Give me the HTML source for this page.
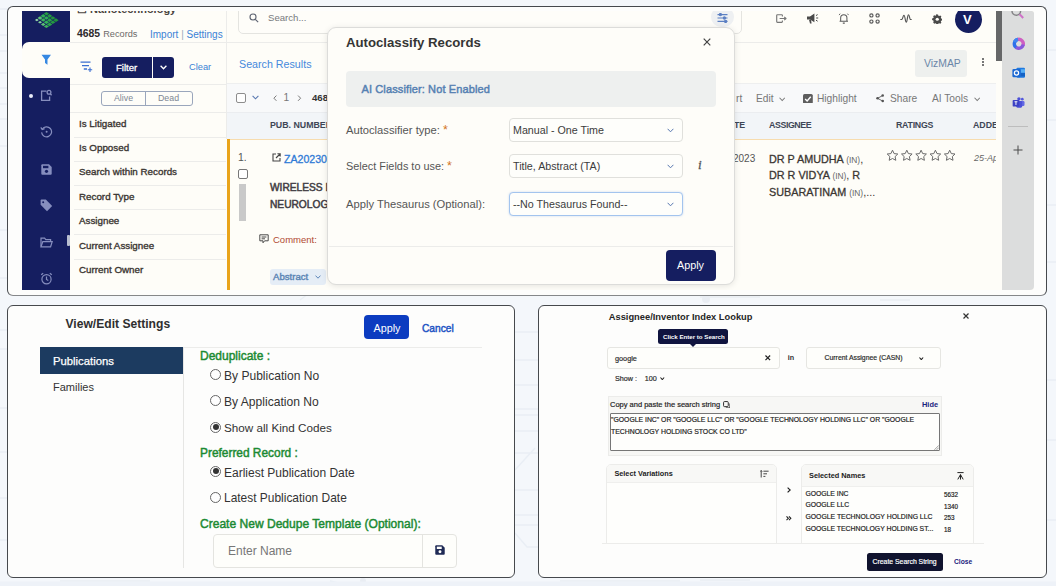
<!DOCTYPE html>
<html>
<head>
<meta charset="utf-8">
<title>UI</title>
<style>
*{box-sizing:border-box;margin:0;padding:0}
html,body{width:1056px;height:586px;overflow:hidden}
body{background:#f4f7fb;font-family:"Liberation Sans",sans-serif;position:relative;color:#333}
.a{position:absolute}
.t{position:absolute;white-space:nowrap;line-height:1}
.b{font-weight:bold}
.frame{position:absolute;border:1px solid #46494d;border-radius:6px;background:#fdfdfc;overflow:hidden}
#ftop{border-bottom-color:#85878a}
/* ---------- top app ---------- */
#app{position:absolute;left:14px;top:4px;width:1012px;height:279px;background:#fefdf8;overflow:hidden}
.nav{position:absolute;left:0;top:0;width:48px;height:279px;background:#151e60}
.hl{position:absolute;height:1px;background:#ececea}
.li{position:absolute;left:57px;font-size:9.8px;color:#3b3632;white-space:nowrap;line-height:1;-webkit-text-stroke:0.35px #3b3632}
.sb{-webkit-text-stroke:0.3px currentColor}
.s2{-webkit-text-stroke:0.18px currentColor}
</style>
</head>
<body>
<!-- background faint lines -->
<svg class="a" style="left:0;top:0" width="1056" height="586" viewBox="0 0 1056 586" fill="none" stroke="#e9eef5" stroke-width="1.3">
  <path d="M0 9H8M0 35H8M0 51H8M0 73H8M0 88H8M0 104H8M0 119H8M0 146H8M0 230H8M0 278H8M0 330H8M0 349H8M0 408H8M0 452H8M0 498H8M0 540H8"/>
  <path d="M1047 50H1056M1047 120H1056M1047 205H1056M1047 262H1056M1047 380H1056M1047 440H1056M1047 520H1056"/>
  <path d="M515 332H539M515 360H539M515 385H539M515 409H539M515 415H539M515 431H539M515 453H539M515 490H539M515 515H539M515 525H539M515 470l20-22M515 533l12 14h12"/>
  <path d="M300 300l8-6M700 297h60M880 300h30M60 581h90M560 581h120M330 581l20 5M700 580h50" stroke="#e9eef4"/>
  <circle cx="706" cy="299" r="4" fill="#e9edf3" stroke="none"/><circle cx="1040" cy="209" r="4" fill="#e9edf3" stroke="none"/><circle cx="363" cy="581" r="3" fill="#e9edf3" stroke="none"/>
  <path d="M0 584H1056" stroke="#eef2f8" stroke-width="5"/>
</svg>

<!-- ================= TOP FRAME ================= -->
<div class="frame" id="ftop" style="left:7px;top:6px;width:1040px;height:290px">
 <div id="app">
  <div class="a" style="left:-2px;top:0;width:2px;height:279px;background:#e2e2e2"></div>
  <div class="nav">
   <!-- logo -->
   <svg class="a" style="left:11px;top:0px" width="26" height="20" viewBox="0 0 26 20">
    <g transform="translate(13.4,1.0) scale(0.9,0.6) rotate(45)">
     <rect x="0" y="0" width="4.2" height="4.2" fill="#259a42"/><rect x="5" y="0" width="4.2" height="4.2" fill="#259a42"/><rect x="10" y="0" width="4.2" height="4.2" fill="#21903c"/><rect x="15" y="0" width="4.2" height="4.2" fill="#21903c"/>
     <rect x="0" y="5" width="4.2" height="4.2" fill="#2fb154"/><rect x="5" y="5" width="4.2" height="4.2" fill="#2fb154"/><rect x="10" y="5" width="4.2" height="4.2" fill="#29a449"/><rect x="15" y="5" width="4.2" height="4.2" fill="#259a42"/>
     <rect x="0" y="10" width="4" height="4" fill="#5cc274"/><rect x="5" y="10" width="4" height="4" fill="#3db35a"/><rect x="10" y="10" width="4.2" height="4.2" fill="#33b558"/><rect x="15" y="10" width="4.2" height="4.2" fill="#29a449"/>
     <rect x="0.5" y="15.5" width="3" height="3" fill="#9bdcab"/><rect x="5.5" y="15.5" width="3.2" height="3.2" fill="#7fd093"/><rect x="10.3" y="15.3" width="3.6" height="3.6" fill="#5cc274"/><rect x="15" y="15" width="4" height="4" fill="#3db35a"/>
    </g>
   </svg>
   <!-- active tab -->
   <div class="a" style="left:0;top:30.5px;width:48px;height:36px;background:#fefdf8;border-radius:7px 0 0 7px"></div>
   <svg class="a" style="left:19px;top:42.5px" width="10.5" height="11.5" viewBox="0 0 12 12" preserveAspectRatio="none"><path d="M0.6 0.8H11.4L7.4 5.8V11.2L4.6 9.4V5.8Z" fill="#3688e2"/></svg>
   <!-- doc icon -->
   <div class="a" style="left:7px;top:83px;width:4px;height:4px;border-radius:2px;background:#e8ebf7"></div>
   <svg class="a" style="left:18px;top:78px" width="13" height="13" viewBox="0 0 13 13" fill="none" stroke="#868ebe" stroke-width="1.3"><path d="M6.5 2.2H1.6V11.4H9.6V7.6"/><circle cx="9" cy="3.3" r="1.9"/><path d="M10.3 4.8L11.6 6.2"/></svg>
   <!-- history -->
   <svg class="a" style="left:18px;top:114px" width="13" height="13" viewBox="0 0 13 13" fill="none" stroke="#868ebe" stroke-width="1.2"><path d="M2.3 4.2A5 5 0 1 1 1.6 7.4"/><path d="M0.8 2.4L2.2 4.6L4.6 3.6"/><circle cx="6.6" cy="6.8" r="1" fill="#868ebe" stroke="none"/></svg>
   <!-- save -->
   <svg class="a" style="left:19px;top:153px" width="11" height="11" viewBox="0 0 11 11"><path d="M1.3 0.3H8L10.7 3V9.7Q10.7 10.7 9.7 10.7H1.3Q0.3 10.7 0.3 9.7V1.3Q0.3 0.3 1.3 0.3Z" fill="#868ebe"/><rect x="2" y="1.8" width="5.4" height="2.4" fill="#151e60"/><circle cx="5.5" cy="7.3" r="1.6" fill="#151e60"/></svg>
   <!-- tag -->
   <svg class="a" style="left:18px;top:188px" width="13" height="13" viewBox="0 0 13 13"><path d="M0.6 1.4Q0.6 0.6 1.4 0.6H5.8L12.2 7L7 12.2L0.6 5.8Z" fill="#868ebe"/><circle cx="3.2" cy="3.2" r="1" fill="#151e60"/></svg>
   <!-- folder -->
   <svg class="a" style="left:18px;top:226px" width="13" height="11" viewBox="0 0 13 11" fill="none" stroke="#868ebe" stroke-width="1.2"><path d="M1 9.6V1.2H4.6L5.8 2.6H10.6V4.4"/><path d="M1 9.8L2.8 4.6H12.2L10.6 9.8Z"/></svg>
   <div class="a" style="left:45px;top:224px;width:3px;height:11px;background:#b9bfd0;border-radius:1px"></div>
   <!-- alarm -->
   <svg class="a" style="left:18px;top:261px" width="13" height="13" viewBox="0 0 13 13" fill="none" stroke="#868ebe" stroke-width="1.2"><circle cx="6.5" cy="7.2" r="4.6"/><path d="M6.5 4.6V7.4L8.3 8.4M1.2 2.8L3.2 1.2M11.8 2.8L9.8 1.2"/></svg>
  </div>

  <!-- ===== filter panel ===== -->
  <div class="t b" style="left:55px;top:-7.2px;font-size:11px;color:#4a4440">&#9744; Nanotechnology</div>
  <div class="t" style="left:55px;top:17px;font-size:11px;color:#6d6a68"><span class="b" style="color:#2e2a2c;font-size:10.4px">4685</span> <span style="font-size:9.2px">Records</span></div>
  <div class="t" style="left:128px;top:19px;font-size:10px;color:#3b82d6">Import <span style="color:#9ab">|</span> Settings</div>
  <div class="hl" style="left:48px;top:30.5px;width:156px"></div>
  <!-- filter row -->
  <svg class="a" style="left:58px;top:50px" width="13" height="12" viewBox="0 0 13 12" fill="none" stroke="#3b6fd0" stroke-width="1.3"><path d="M0.5 1.2H10.5M2 4.6H9M3.8 8H7"/><path d="M10 6.6V11M7.8 8.8H12.2" stroke-width="1.1"/></svg>
  <div class="a" style="left:80px;top:46px;width:50px;height:21px;background:#151e60;border-radius:3px 0 0 3px"></div>
  <div class="a" style="left:131px;top:46px;width:21px;height:21px;background:#151e60;border-radius:0 3px 3px 0"></div>
  <div class="t sb" style="left:94px;top:52px;font-size:9.6px;color:#fff">Filter</div>
  <svg class="a" style="left:138px;top:54px" width="7" height="5" viewBox="0 0 7 5" fill="none" stroke="#fff" stroke-width="1.3"><path d="M0.6 0.8L3.5 3.8L6.4 0.8"/></svg>
  <div class="t" style="left:167px;top:52px;font-size:9.3px;color:#3b82d6">Clear</div>
  <div class="hl" style="left:48px;top:73px;width:156px"></div>
  <!-- alive dead -->
  <div class="a" style="left:79px;top:80px;width:92px;height:15px;border:1px solid #9aa6bc;border-radius:3px;background:#fefdf8"></div>
  <div class="a" style="left:123px;top:80px;width:1px;height:15px;background:#9aa6bc"></div>
  <div class="t" style="left:92px;top:83px;font-size:8.8px;color:#7d8794">Alive</div>
  <div class="t" style="left:136px;top:83px;font-size:8.8px;color:#7d8794">Dead</div>
  <div class="hl" style="left:48px;top:101px;width:156px"></div>
  <div class="li" style="top:107.6px">Is Litigated</div>
  <div class="hl" style="left:52px;top:125.5px;width:152px"></div>
  <div class="li" style="top:132px">Is Opposed</div>
  <div class="hl" style="left:52px;top:150px;width:152px"></div>
  <div class="li" style="top:156.4px">Search within Records</div>
  <div class="hl" style="left:52px;top:174px;width:152px"></div>
  <div class="li" style="top:180.8px">Record Type</div>
  <div class="hl" style="left:52px;top:198px;width:152px"></div>
  <div class="li" style="top:205.2px">Assignee</div>
  <div class="hl" style="left:52px;top:223px;width:152px"></div>
  <div class="li" style="top:229.6px">Current Assignee</div>
  <div class="hl" style="left:52px;top:248px;width:152px"></div>
  <div class="li" style="top:254px">Current Owner</div>
  <!-- divider -->
  <div class="a" style="left:204px;top:0;width:1px;height:128px;background:#ececea"></div>
<!-- ===== main area ===== -->
  <!-- search box -->
  <div class="a" style="left:216px;top:-10px;width:504px;height:32.5px;border:1px solid #e4e4e0;border-radius:5px;background:#fefdf9"></div>
  <svg class="a" style="left:227.3px;top:2.4px" width="10" height="10" viewBox="0 0 10 10" fill="none" stroke="#5e6472" stroke-width="1.15"><circle cx="4" cy="4" r="3"/><path d="M6.3 6.3L9.2 9.2"/></svg>
  <div class="t" style="left:246px;top:2.3px;font-size:9.6px;color:#77797c">Search...</div>
  <div class="a" style="left:689px;top:-4px;width:23px;height:20px;border-radius:10px;background:#eef0f2"></div>
  <svg class="a" style="left:695px;top:2px" width="11" height="10" viewBox="0 0 11 10" fill="none" stroke="#5b7fc2" stroke-width="1.1"><path d="M0.5 1.6H10.5M0.5 5H10.5M0.5 8.4H10.5"/><circle cx="3.4" cy="1.6" r="1.1" fill="#5b7fc2"/><circle cx="7.4" cy="5" r="1.1" fill="#5b7fc2"/><circle cx="8.6" cy="8.4" r="1.1" fill="#5b7fc2"/></svg>
  <!-- header icons -->
  <svg class="a" style="left:754px;top:3.2px" width="11" height="9" viewBox="0 0 11 9" fill="none" stroke="#777" stroke-width="1.15" stroke-linejoin="round"><path d="M6.4 2.4V1.4Q6.4 0.7 5.7 0.7H1.4Q0.7 0.7 0.7 1.4V7.6Q0.7 8.3 1.4 8.3H5.7Q6.4 8.3 6.4 7.6V6.6"/><path d="M3.6 4.5H9.8M8.2 2.8L10 4.5L8.2 6.2"/></svg>
  <svg class="a" style="left:784px;top:1px" width="13" height="13" viewBox="0 0 13 13"><path d="M1 4.4H4L8.4 1.6V10.2L4 7.6H1Z" fill="#4a4a4a"/><path d="M3 7.8L4 11.4H5.6L5 7.8" fill="#4a4a4a"/><path d="M10 3.6L11.6 2.6M10.2 6H12.2M10 8.2L11.6 9.2" stroke="#4a4a4a" stroke-width="1" fill="none"/></svg>
  <svg class="a" style="left:815.8px;top:1px" width="11.6" height="12.6" viewBox="0 0 13 14" fill="none" stroke="#5a5a5a" stroke-width="1.15"><path d="M3 10.2V6.4A3.5 3.5 0 0 1 10 6.4V10.2M1.8 10.4H11.2M5.4 12.4H7.6"/><path d="M1.2 3.4L2.4 1.8M11.8 3.4L10.6 1.8" stroke-width="1"/></svg>
  <svg class="a" style="left:847px;top:2px" width="11" height="11" viewBox="0 0 11 11" fill="none" stroke="#5a5a5a" stroke-width="1.2"><circle cx="2.4" cy="2.4" r="1.6"/><circle cx="8.6" cy="2.4" r="1.6"/><circle cx="2.4" cy="8.6" r="1.6"/><circle cx="8.6" cy="8.6" r="1.6"/></svg>
  <svg class="a" style="left:877.5px;top:2px" width="12" height="11" viewBox="0 0 13 11" fill="none" stroke="#555" stroke-width="1.25" stroke-linecap="round"><path d="M0.8 6.6H1.8C3 6.6 3.2 2 4.3 2C5.5 2 5.6 9.4 6.8 9.4C8 9.4 8 1.4 9.2 1.4C10.3 1.4 10.3 6 11.2 6.600000000000000H12.2"/></svg>
  <svg class="a" style="left:909.5px;top:2.5px" width="10.5" height="10.5" viewBox="0 0 13 13"><path d="M6.5 0.8l1 .1.4 1.5 1 .5 1.4-.7 1.3 1.3-.7 1.4.5 1 1.5.4v2l-1.5.4-.5 1 .7 1.4-1.3 1.3-1.4-.7-1 .5-.4 1.5h-2l-.4-1.5-1-.5-1.4.7L1.4 10.600000000000001l.7-1.4-.5-1L.1 7.8v-2l1.500000000000000-.4.5-1-.7-1.4L2.700000000000000 1.7000000000000002l1.4.7 1-.5.4-1.5z" fill="#4a4a4a" transform="translate(0,-0.3)"/><circle cx="6.5" cy="6.5" r="2" fill="#fefdf8"/></svg>
  <div class="a" style="left:933px;top:-5px;width:27px;height:27px;border-radius:14px;background:#151e60"></div>
  <div class="t b" style="left:941px;top:2px;font-size:13px;color:#fff">V</div>
  <div class="hl" style="left:205px;top:31px;width:769px"></div>
  <!-- search results row -->
  <div class="t" style="left:217px;top:47.8px;font-size:10.7px;color:#4589dc">Search Results</div>
  <div class="a" style="left:893px;top:39px;width:52px;height:27px;border-radius:3px;background:#eef0ee"></div>
  <div class="t" style="left:902px;top:47.6px;font-size:10.4px;color:#6a86a8">VizMAP</div>
  <div class="a" style="left:960px;top:47px;width:1.8px;height:1.8px;background:#777;box-shadow:0 3px 0 #777,0 6px 0 #777"></div>
  <!-- toolbar row -->
  <div class="a" style="left:205px;top:72px;width:769px;height:29px;background:#f8f9fa;border-top:1px solid #eeefef"></div>
  <div class="a" style="left:205px;top:101px;width:769px;height:27px;background:#f2f5f8;border-top:1px solid #ebedf0"></div>
  <div class="a" style="left:214px;top:82px;width:10px;height:10px;border:1.2px solid #8d8d8d;border-radius:2px;background:#fefefe"></div>
  <svg class="a" style="left:230px;top:84px" width="7" height="5" viewBox="0 0 7 5" fill="none" stroke="#5878b0" stroke-width="1.1"><path d="M0.6 0.8L3.5 3.8L6.4 0.8"/></svg>
  <svg class="a" style="left:251px;top:84px" width="4.5" height="6.4" viewBox="0 0 5 7" fill="none" stroke="#777" stroke-width="1.1"><path d="M3.8 0.6L1 3.5L3.8 6.4"/></svg>
  <div class="t" style="left:261.5px;top:82px;font-size:10.2px;color:#777">1</div>
  <svg class="a" style="left:275px;top:84px" width="4.5" height="6.4" viewBox="0 0 5 7" fill="none" stroke="#777" stroke-width="1.1"><path d="M1.2 0.6L4 3.5L1.2 6.4"/></svg>
  <div class="t b" style="left:290px;top:82px;font-size:9.6px;color:#333">4685</div>
  <!-- toolbar right -->
  <div class="t" style="left:714px;top:83px;font-size:10.2px;color:#777">rt</div>
  <div class="t" style="left:734px;top:83px;font-size:10.2px;color:#777">Edit</div>
  <svg class="a" style="left:756.5px;top:86px" width="6.4" height="4.6" viewBox="0 0 7 5" fill="none" stroke="#777" stroke-width="1.1"><path d="M0.6 0.8L3.5 3.8L6.4 0.8"/></svg>
  <svg class="a" style="left:781px;top:82.6px" width="9.8" height="9.8" viewBox="0 0 10 10"><rect x="0" y="0" width="10" height="10" rx="1.6" fill="#5e5e5e"/><path d="M2.2 5.2L4.2 7.2L7.9 2.8" fill="none" stroke="#fff" stroke-width="1.4"/></svg>
  <div class="t" style="left:795px;top:83px;font-size:10.2px;color:#777">Highlight</div>
  <svg class="a" style="left:853.5px;top:83.4px" width="8.6" height="8.6" viewBox="0 0 10 10" fill="#555"><circle cx="7.8" cy="1.8" r="1.5"/><circle cx="1.8" cy="5" r="1.5"/><circle cx="7.8" cy="8.2" r="1.5"/><path d="M7.8 1.8L1.8 5L7.800000000000001 8.2" fill="none" stroke="#555" stroke-width="1"/></svg>
  <div class="t" style="left:868px;top:83px;font-size:10.2px;color:#777">Share</div>
  <div class="t" style="left:910px;top:83px;font-size:10.2px;color:#777">AI Tools</div>
  <svg class="a" style="left:951.5px;top:86px" width="6.4" height="4.6" viewBox="0 0 7 5" fill="none" stroke="#777" stroke-width="1.1"><path d="M0.6 0.8L3.5 3.8L6.4 0.8"/></svg>
  <!-- table header -->
  <div class="t b" style="left:248px;top:110px;font-size:8.8px;color:#3e4656">PUB. NUMBER</div>
  <div class="t b" style="left:712px;top:110px;font-size:8.8px;color:#3e4656">TE</div>
  <div class="t b" style="left:747px;top:110px;font-size:8.8px;color:#3e4656;letter-spacing:-0.4px">ASSIGNEE</div>
  <div class="t b" style="left:874px;top:110px;font-size:8.8px;color:#3e4656;letter-spacing:-0.25px">RATINGS</div>
  <div class="t b" style="left:951px;top:110px;font-size:8.8px;color:#3e4656">ADDED</div>
  <div class="a" style="left:205px;top:127.7px;width:769px;height:1.5px;background:#f7dcae"></div>
  <div class="a" style="left:204.5px;top:127.7px;width:3px;height:152px;background:#e9a41a"></div>
  <!-- row -->
  <div class="t" style="left:216px;top:142px;font-size:10.4px;color:#555">1.</div>
  <div class="a" style="left:216px;top:158px;width:10px;height:10px;border:1.2px solid #777;border-radius:2px;background:#fefefe"></div>
  <div class="a" style="left:217px;top:173px;width:7px;height:37px;background:#c9c9c9"></div>
  <svg class="a" style="left:250px;top:142px" width="9" height="9" viewBox="0 0 9 9" fill="none" stroke="#444" stroke-width="1.1"><path d="M4 1H1V8H8V5"/><path d="M5.4 0.8H8.2V3.600000000000000M8 1L4 5"/></svg>
  <div class="t sb" style="left:262px;top:142.5px;font-size:10.6px;color:#2f7ad6">ZA2023000</div>
  <div class="t" style="left:248px;top:171.5px;font-size:10.2px;color:#433e44;-webkit-text-stroke:0.5px #433e44">WIRELESS NE</div>
  <div class="t" style="left:248px;top:188.5px;font-size:10.2px;color:#433e44;-webkit-text-stroke:0.5px #433e44">NEUROLOGI</div>
  <svg class="a" style="left:237px;top:223px" width="10" height="10" viewBox="0 0 10 10" fill="none" stroke="#4a4a4a" stroke-width="1"><path d="M0.8 0.8H9.2V6.8H5.6L4 8.8V6.8H0.8Z"/><path d="M2.6 3H7.4M2.6 4.800000000000001H6"/></svg>
  <div class="t" style="left:251px;top:224px;font-size:9.5px;color:#b14a32">Comment:</div>
  <div class="a" style="left:248px;top:258px;width:55.5px;height:15.5px;border-radius:3px;background:#e5edf6"></div>
  <div class="t sb" style="left:251px;top:261.3px;font-size:9.6px;color:#5a84b4;-webkit-text-stroke:0.4px #5a84b4">Abstract</div>
  <svg class="a" style="left:293px;top:264px" width="6" height="4" viewBox="0 0 6 4" fill="none" stroke="#5d86b8" stroke-width="1"><path d="M0.5 0.6L3 3.2L5.5 0.6"/></svg>
  <!-- row right -->
  <div class="t" style="left:711px;top:143px;font-size:10px;color:#555">2023</div>
  <div class="t" style="left:747px;top:142.5px;font-size:10.8px;color:#3b3632"><span class="sb">DR P AMUDHA</span> <span style="font-size:8.4px;color:#666">(IN)</span>,</div>
  <div class="t" style="left:747px;top:159.3px;font-size:10.8px;color:#3b3632"><span class="sb">DR R VIDYA</span> <span style="font-size:8.4px;color:#666">(IN)</span>, <span class="sb">R</span></div>
  <div class="t" style="left:747px;top:176.3px;font-size:10.8px;color:#3b3632"><span class="sb">SUBARATINAM</span> <span style="font-size:8.4px;color:#666">(IN)</span>,...</div>
  <svg class="a" style="left:864px;top:138px" width="72" height="13" viewBox="0 0 72 13" fill="none" stroke="#6a6a6a" stroke-width="1"><g id="st"><path d="M6.5 1.2L8.1 4.6L11.8 5L9.1 7.600000000000000L9.8 11.3L6.5 9.5L3.2 11.3L3.9 7.6L1.2 5L4.9 4.6Z"/></g><use href="#st" x="14.3"/><use href="#st" x="28.6"/><use href="#st" x="42.9"/><use href="#st" x="57.2"/></svg>
  <div class="t" style="left:952px;top:143px;font-size:9px;font-style:italic;color:#666">25-Apr</div>
  <!-- scrollbar + edge sidebar -->
  <div class="a" style="left:974px;top:0;width:8px;height:279px;background:#fefdf8"></div>
  <div class="a" style="left:973.8px;top:0;width:6px;height:50px;background:#666768"></div>
  <div class="a" style="left:979.5px;top:0;width:32.1px;height:279px;background:#dcdddd;border-radius:0 2.5px 4px 0"></div>
<!-- edge sidebar icons -->
  <svg class="a" style="left:988px;top:-6px" width="15" height="15" viewBox="0 0 15 15" fill="none"><circle cx="6.3" cy="5.9" r="4.3" stroke="#858587" stroke-width="1.5"/><path d="M9.6 9.2L13.2 13" stroke="#cf72c8" stroke-width="2"/></svg>
  <svg class="a" style="left:989.8px;top:25.8px" width="13.6" height="13.6" viewBox="0 0 14 14" fill="none" stroke-width="3.5" stroke-linecap="butt"><path d="M4.70 10.98A4.6 4.6 0 0 1 6.20 2.47" stroke="#2d70ea"/><path d="M5.43 2.68A4.6 4.6 0 0 1 11.32 8.57" stroke="#cf5fc2"/><path d="M11.53 7.80A4.6 4.6 0 0 1 4.04 10.52" stroke="#8a58dc"/><path d="M2.68 5.43A4.6 4.6 0 0 1 6.20 2.47" stroke="#3f86f0"/></svg>
  <svg class="a" style="left:990px;top:56.4px" width="13.4" height="11.8" viewBox="0 0 14 12"><rect x="4.6" y="0.6" width="9" height="10.4" rx="1.2" fill="#1f7ae0"/><rect x="9" y="2.2" width="4.6" height="3.8" fill="#58b0f6"/><rect x="9" y="6" width="4.6" height="3.6" fill="#1562c4"/><rect x="0.4" y="1.8" width="8.6" height="8.8" rx="1.3" fill="#1b68d2"/><circle cx="4.7" cy="6.2" r="2.2" fill="none" stroke="#fff" stroke-width="1.3"/></svg>
  <svg class="a" style="left:990.4px;top:86.4px" width="13" height="11" viewBox="0 0 15 13"><circle cx="12" cy="2.6" r="1.6" fill="#5358dc"/><circle cx="8" cy="2.2" r="2" fill="#4b50d8"/><rect x="9.6" y="4.8" width="5" height="5.8" rx="1.4" fill="#6368e4"/><rect x="4.8" y="4.6" width="7" height="8" rx="1.6" fill="#4b50d8"/><rect x="0.6" y="3.4" width="7.8" height="7.8" rx="1" fill="#3d42c4"/><path d="M2.8 5.6H6.2M4.5 5.6V9.4" stroke="#fff" stroke-width="1.1"/></svg>
  <div class="a" style="left:986px;top:115px;width:20px;height:1px;background:#bdbdbd"></div>
  <svg class="a" style="left:991px;top:134px" width="10" height="10" viewBox="0 0 10 10" stroke="#4a4a4a" stroke-width="1"><path d="M5 0.5V9.5M0.5 5H9.5"/></svg>
<!-- ===== modal ===== -->
  <div class="a" style="left:305px;top:16px;width:407.5px;height:258px;background:#fefdf9;border:1px solid #dcdcda;border-radius:9px;box-shadow:0 1px 6px rgba(0,0,0,0.10)"></div>
  <div class="t b" style="left:324px;top:25px;font-size:13.2px;color:#353535">Autoclassify Records</div>
  <svg class="a" style="left:681px;top:27px" width="8" height="8" viewBox="0 0 8 8" fill="none" stroke="#444" stroke-width="1.2"><path d="M0.7 0.7L7.3 7.3M7.3 0.7L0.7 7.3"/></svg>
  <div class="a" style="left:324px;top:59.6px;width:370px;height:36px;border-radius:4px;background:#eef0ef"></div>
  <div class="t" style="left:339.5px;top:73.2px;font-size:11px;color:#5580b2;letter-spacing:0.12px;-webkit-text-stroke:0.45px #5580b2">AI Classifier: Not Enabled</div>
  <!-- rows -->
  <div class="t" style="left:324px;top:114px;font-size:11.2px;color:#555">Autoclassifier type: <span style="color:#d2741c;font-size:12.5px;line-height:0">*</span></div>
  <div class="a" style="left:487px;top:107px;width:174px;height:24px;border:1px solid #e0e0dc;border-radius:4px;background:#fefefb"></div>
  <div class="t" style="left:491px;top:114px;font-size:10.7px;color:#3c3c3c">Manual - One Time</div>
  <svg class="a" style="left:645px;top:117px" width="7" height="5" viewBox="0 0 7 5" fill="none" stroke="#5878b0" stroke-width="1"><path d="M0.6 0.8L3.5 3.8L6.4 0.8"/></svg>
  <div class="t" style="left:324px;top:150px;font-size:10.9px;color:#555">Select Fields to use: <span style="color:#d2741c;font-size:12.5px;line-height:0">*</span></div>
  <div class="a" style="left:487px;top:143px;width:174px;height:24px;border:1px solid #e0e0dc;border-radius:4px;background:#fefefb"></div>
  <div class="t" style="left:491px;top:150px;font-size:10.7px;color:#3c3c3c">Title, Abstract (TA)</div>
  <svg class="a" style="left:645px;top:153px" width="7" height="5" viewBox="0 0 7 5" fill="none" stroke="#5878b0" stroke-width="1"><path d="M0.6 0.8L3.5 3.8L6.4 0.8"/></svg>
  <div class="t" style="left:676px;top:147px;font-size:13px;font-style:italic;font-family:'Liberation Serif',serif;color:#555;-webkit-text-stroke:0.3px #555">i</div>
  <div class="t" style="left:324px;top:188px;font-size:11.2px;color:#555">Apply Thesaurus (Optional):</div>
  <div class="a" style="left:487px;top:181px;width:174px;height:24px;border:1px solid #a3c4ee;border-radius:4px;background:#fefefb;box-shadow:0 0 2px rgba(140,180,240,0.5)"></div>
  <div class="t" style="left:491px;top:188px;font-size:10.7px;color:#3c3c3c">--No Thesaurus Found--</div>
  <svg class="a" style="left:645px;top:191px" width="7" height="5" viewBox="0 0 7 5" fill="none" stroke="#5878b0" stroke-width="1"><path d="M0.6 0.8L3.5 3.8L6.4 0.8"/></svg>
  <div class="a" style="left:307px;top:235px;width:404px;height:1px;background:#ececea"></div>
  <div class="a" style="left:644px;top:239px;width:50px;height:31px;border-radius:4px;background:#151e60"></div>
  <div class="t" style="left:655px;top:249px;font-size:10.8px;color:#fff">Apply</div>
 </div>
</div>

<!-- ================= BOTTOM LEFT FRAME ================= -->
<div class="frame" id="fbl" style="left:7px;top:305px;width:508px;height:273px">
  <div class="t b" style="left:57.5px;top:12.3px;font-size:12.1px;color:#2f2f2f">View/Edit Settings</div>
  <div class="a" style="left:356px;top:9px;width:45px;height:24px;border-radius:4px;background:#0c3cc0"></div>
  <div class="t" style="left:365.5px;top:16.5px;font-size:10.8px;color:#fff">Apply</div>
  <div class="t" style="left:414px;top:17.8px;font-size:10.2px;color:#1f55c4;-webkit-text-stroke:0.45px #1f55c4">Cancel</div>
  <div class="a" style="left:32px;top:40.5px;width:442px;height:1px;background:#ececea"></div>
  <div class="a" style="left:32px;top:41px;width:143px;height:27px;background:#1c3b60"></div>
  <div class="t" style="left:45px;top:49px;font-size:11.3px;color:#fff;-webkit-text-stroke:0.25px #fff;margin-top:0.5px">Publications</div>
  <div class="t" style="left:45px;top:76px;font-size:11px;color:#333">Families</div>
  <div class="a" style="left:175px;top:41px;width:1px;height:221px;background:#e6e6e4"></div>
  <div class="t" style="left:192px;top:44px;font-size:12px;color:#1b8a32;-webkit-text-stroke:0.45px #1b8a32;margin-top:0.4px">Deduplicate :</div>
  <div class="a" style="left:202.3px;top:62.89999999999998px;width:11px;height:11px;border:1px solid #666;border-radius:6px;background:#fefefe"></div>
  <div class="t" style="left:216px;top:63.5px;font-size:12.05px;color:#333">By Publication No</div>
  <div class="a" style="left:202.3px;top:89.19999999999999px;width:11px;height:11px;border:1px solid #666;border-radius:6px;background:#fefefe"></div>
  <div class="t" style="left:216px;top:89.5px;font-size:12.1px;color:#333">By Application No</div>
  <div class="a" style="left:202.3px;top:115.5px;width:11px;height:11px;border:1px solid #666;border-radius:6px;background:#fefefe"><div class="a" style="left:1.5px;top:1.5px;width:6px;height:6px;border-radius:3px;background:#333"></div></div>
  <div class="t" style="left:216px;top:115.5px;font-size:11.7px;color:#333">Show all Kind Codes</div>
  <div class="t" style="left:192px;top:141.5px;font-size:11.9px;color:#1b8a32;-webkit-text-stroke:0.45px #1b8a32;margin-top:0.4px">Preferred Record :</div>
  <div class="a" style="left:202.3px;top:159.89999999999998px;width:11px;height:11px;border:1px solid #666;border-radius:6px;background:#fefefe"><div class="a" style="left:1.5px;top:1.5px;width:6px;height:6px;border-radius:3px;background:#333"></div></div>
  <div class="t" style="left:216px;top:160.5px;font-size:12px;color:#333">Earliest Publication Date</div>
  <div class="a" style="left:202.3px;top:186.2px;width:11px;height:11px;border:1px solid #666;border-radius:6px;background:#fefefe"></div>
  <div class="t" style="left:216px;top:186.5px;font-size:11.95px;color:#333">Latest Publication Date</div>
  <div class="t" style="left:192px;top:212px;font-size:12.05px;color:#1b8a32;-webkit-text-stroke:0.45px #1b8a32;margin-top:0.4px">Create New Dedupe Template (Optional):</div>
  <div class="a" style="left:205px;top:228px;width:244px;height:33.5px;border:1px solid #e4e4e0;border-radius:4px;background:#fefefb"></div>
  <div class="a" style="left:413.5px;top:228px;width:1px;height:33.5px;background:#e4e4e0"></div>
  <div class="t" style="left:220px;top:238.5px;font-size:12px;color:#777">Enter Name</div>
  <svg class="a" style="left:427px;top:239px" width="10" height="10" viewBox="0 0 11 11"><path d="M1.3 0.3H8L10.7 3V9.7Q10.7 10.7 9.7 10.7H1.3Q0.3 10.7 0.3 9.7V1.3Q0.3 0.3 1.3 0.3Z" fill="#1f2a55"/><rect x="2" y="1.8" width="5.4" height="2.6" fill="#fefefb"/><circle cx="5.5" cy="7.4" r="1.6" fill="#fefefb"/></svg>
</div>

<!-- ================= BOTTOM RIGHT FRAME ================= -->
<div class="frame" id="fbr" style="left:538px;top:305px;width:509px;height:273px">
  <div class="t b" style="left:69.8px;top:7.24px;font-size:9.3px;color:#262626;">Assignee/Inventor Index Lookup</div>
  <svg class="a" style="left:423.5px;top:7px" width="6" height="6" viewBox="0 0 6 6" fill="none" stroke="#333" stroke-width="1.2"><path d="M0.5 0.5L5.5 5.5M5.5 0.5L0.5 5.5"/></svg>
  <div class="a" style="left:119.2px;top:23.3px;width:70.2px;height:15.2px;background:#10143f;border-radius:2.5px"></div>
  <div class="a" style="left:151px;top:38.19999999999999px;width:0;height:0;border-left:3.4px solid transparent;border-right:3.4px solid transparent;border-top:3.4px solid #10143f"></div>
  <div class="t b" style="left:124px;top:28.19px;font-size:6.15px;color:#fff;">Click Enter to Search</div>
  <div class="a" style="left:68px;top:41.1px;width:172.8px;height:21.7px;border:1px solid #e6e6e2;border-radius:3px;background:#fefefb"></div>
  <div class="t s2" style="left:76px;top:49.02px;font-size:7.3px;color:#2a2a2a;">google</div>
  <svg class="a" style="left:226.29999999999995px;top:49.39999999999998px" width="5.6" height="5.6" viewBox="0 0 6 6" fill="none" stroke="#222" stroke-width="1.3"><path d="M0.5 0.5L5.5 5.5M5.5 0.5L0.5 5.5"/></svg>
  <div class="t b" style="left:248.7px;top:47.67px;font-size:7.2px;color:#333;">in</div>
  <div class="a" style="left:267.2px;top:41.1px;width:134.8px;height:21.7px;border:1px solid #e6e6e2;border-radius:3px;background:#fefefb"></div>
  <div class="t s2" style="left:285.6px;top:49.04px;font-size:6.85px;color:#2a2a2a;">Current Assignee (CASN)</div>
  <svg class="a" style="left:380.4px;top:51px" width="4.6" height="3.4" viewBox="0 0 5 3.6" fill="none" stroke="#222" stroke-width="1.2"><path d="M0.5 0.5L2.5 2.8L4.5 0.5"/></svg>
  <div class="t s2" style="left:76px;top:68.67px;font-size:7.2px;color:#2a2a2a;">Show :</div>
  <div class="t s2" style="left:105.7px;top:68.67px;font-size:7.2px;color:#2a2a2a;">100</div>
  <svg class="a" style="left:121.20000000000005px;top:70.80000000000001px" width="4.6" height="3.4" viewBox="0 0 5 3.6" fill="none" stroke="#222" stroke-width="1.1"><path d="M0.5 0.5L2.5 2.8L4.5 0.5"/></svg>
  <div class="a" style="left:68.8px;top:89.6px;width:334.4px;height:60.4px;background:#f7f7f5;border:1px solid #ececea"></div>
  <div class="t s2" style="left:71px;top:94.93px;font-size:7.5px;color:#222;">Copy and paste the search string</div>
  <svg class="a" style="left:183.5px;top:94.80000000000001px" width="7.5" height="7.5" viewBox="0 0 8 8" fill="none" stroke="#222" stroke-width="1"><rect x="0.6" y="0.6" width="5" height="5.4" rx="1"/><path d="M3 7.4H6.4Q7.4 7.4 7.4 6.4V2.6"/></svg>
  <div class="t b" style="left:383px;top:94.97px;font-size:7.4px;color:#1a237e;">Hide</div>
  <div class="a" style="left:71px;top:106.5px;width:330px;height:38.5px;background:#fefefc;border:1px solid #767676;border-radius:1px"></div>
  <div class="t s2" style="left:72px;top:111.34px;font-size:6.85px;color:#222;">&quot;GOOGLE INC&quot; OR &quot;GOOGLE LLC&quot; OR &quot;GOOGLE TECHNOLOGY HOLDING LLC&quot; OR &quot;GOOGLE</div>
  <div class="t s2" style="left:72px;top:123.03px;font-size:6.88px;color:#222;">TECHNOLOGY HOLDING STOCK CO LTD&quot;</div>
  <svg class="a" style="left:395px;top:138.8px" width="5" height="5" viewBox="0 0 5 5" stroke="#777" stroke-width="0.7"><path d="M4.8 0.4L0.4 4.8M4.8 2.6L2.6 4.8"/></svg>
  <div class="a" style="left:67.3px;top:158.2px;width:170.7px;height:80.8px;background:#fefefc;border:1px solid #ececea;border-radius:5px 5px 0 0"></div>
  <div class="a" style="left:68.3px;top:159.2px;width:168.7px;height:18.3px;background:#f8f8f6;border-bottom:1px solid #efefed;border-radius:4px 4px 0 0"></div>
  <div class="t b" style="left:75.4px;top:164.02px;font-size:7.3px;color:#222;">Select Variations</div>
  <svg class="a" style="left:221px;top:163.60000000000002px" width="9" height="8" viewBox="0 0 9 8" fill="none" stroke="#333" stroke-width="0.9"><path d="M1.2 0.5V7.5M0.2 1.6L1.2 0.5L2.2 1.6M3.4 1.2H8.6M3.4 3.8H7M3.4 6.4H5.4"/></svg>
  <svg class="a" style="left:248px;top:181.39999999999998px" width="4" height="6" viewBox="0 0 4 6" fill="none" stroke="#222" stroke-width="1.2"><path d="M0.6 0.6L3.2 3L0.6 5.4"/></svg>
  <svg class="a" style="left:247.20000000000005px;top:210px" width="5.6" height="4.6" viewBox="0 0 6 5" fill="none" stroke="#222" stroke-width="1.2"><path d="M0.5 0.5L2.5 2.5L0.5 4.5M3.2 0.5L5.2 2.5L3.2 4.5"/></svg>
  <div class="a" style="left:262.4px;top:158.2px;width:172.3px;height:80.8px;background:#fefefc;border:1px solid #ececea;border-radius:5px 5px 0 0"></div>
  <div class="a" style="left:263.4px;top:159.2px;width:170.3px;height:22.0px;background:#f8f8f6;border-bottom:1px solid #efefed;border-radius:4px 4px 0 0"></div>
  <div class="t b" style="left:270px;top:166.4px;font-size:7.35px;color:#222;">Selected Names</div>
  <svg class="a" style="left:417.5px;top:165.60000000000002px" width="7" height="8" viewBox="0 0 7 8" fill="none" stroke="#222" stroke-width="1"><path d="M0.4 0.6H6.6M3.5 7.6V2.6M0.8 7.4L3.5 2.6L6.2 7.4"/></svg>
  <div class="t s2" style="left:266.4px;top:184.87px;font-size:6.8px;color:#222;">GOOGLE INC</div>
  <div class="t s2" style="left:404.9px;top:186.11px;font-size:6.3px;color:#222;">5632</div>
  <div class="t s2" style="left:266.4px;top:196.47px;font-size:6.8px;color:#222;">GOOGLE LLC</div>
  <div class="t s2" style="left:404.9px;top:197.71px;font-size:6.3px;color:#222;">1340</div>
  <div class="t s2" style="left:266.4px;top:208.04px;font-size:6.86px;color:#222;">GOOGLE TECHNOLOGY HOLDING LLC</div>
  <div class="t s2" style="left:404.9px;top:209.31px;font-size:6.3px;color:#222;">253</div>
  <div class="t s2" style="left:266.4px;top:219.64px;font-size:6.85px;color:#222;">GOOGLE TECHNOLOGY HOLDING ST...</div>
  <div class="t s2" style="left:404.9px;top:220.91px;font-size:6.3px;color:#222;">18</div>
  <div class="a" style="left:61px;top:237.4px;width:386px;height:26.6px;background:#fdfdfc"></div>
  <div class="a" style="left:63.3px;top:236.9px;width:381.5px;height:1.2px;background:#ececea"></div>
  <div class="a" style="left:327.6px;top:246.8px;width:76.3px;height:18.2px;background:#10132e;border-radius:2.5px"></div>
  <div class="t s2" style="left:333.6px;top:252.84px;font-size:6.85px;color:#fff;">Create Search String</div>
  <div class="t b" style="left:415px;top:252.92px;font-size:6.7px;color:#1a237e;">Close</div>
</div>

</body>
</html>
